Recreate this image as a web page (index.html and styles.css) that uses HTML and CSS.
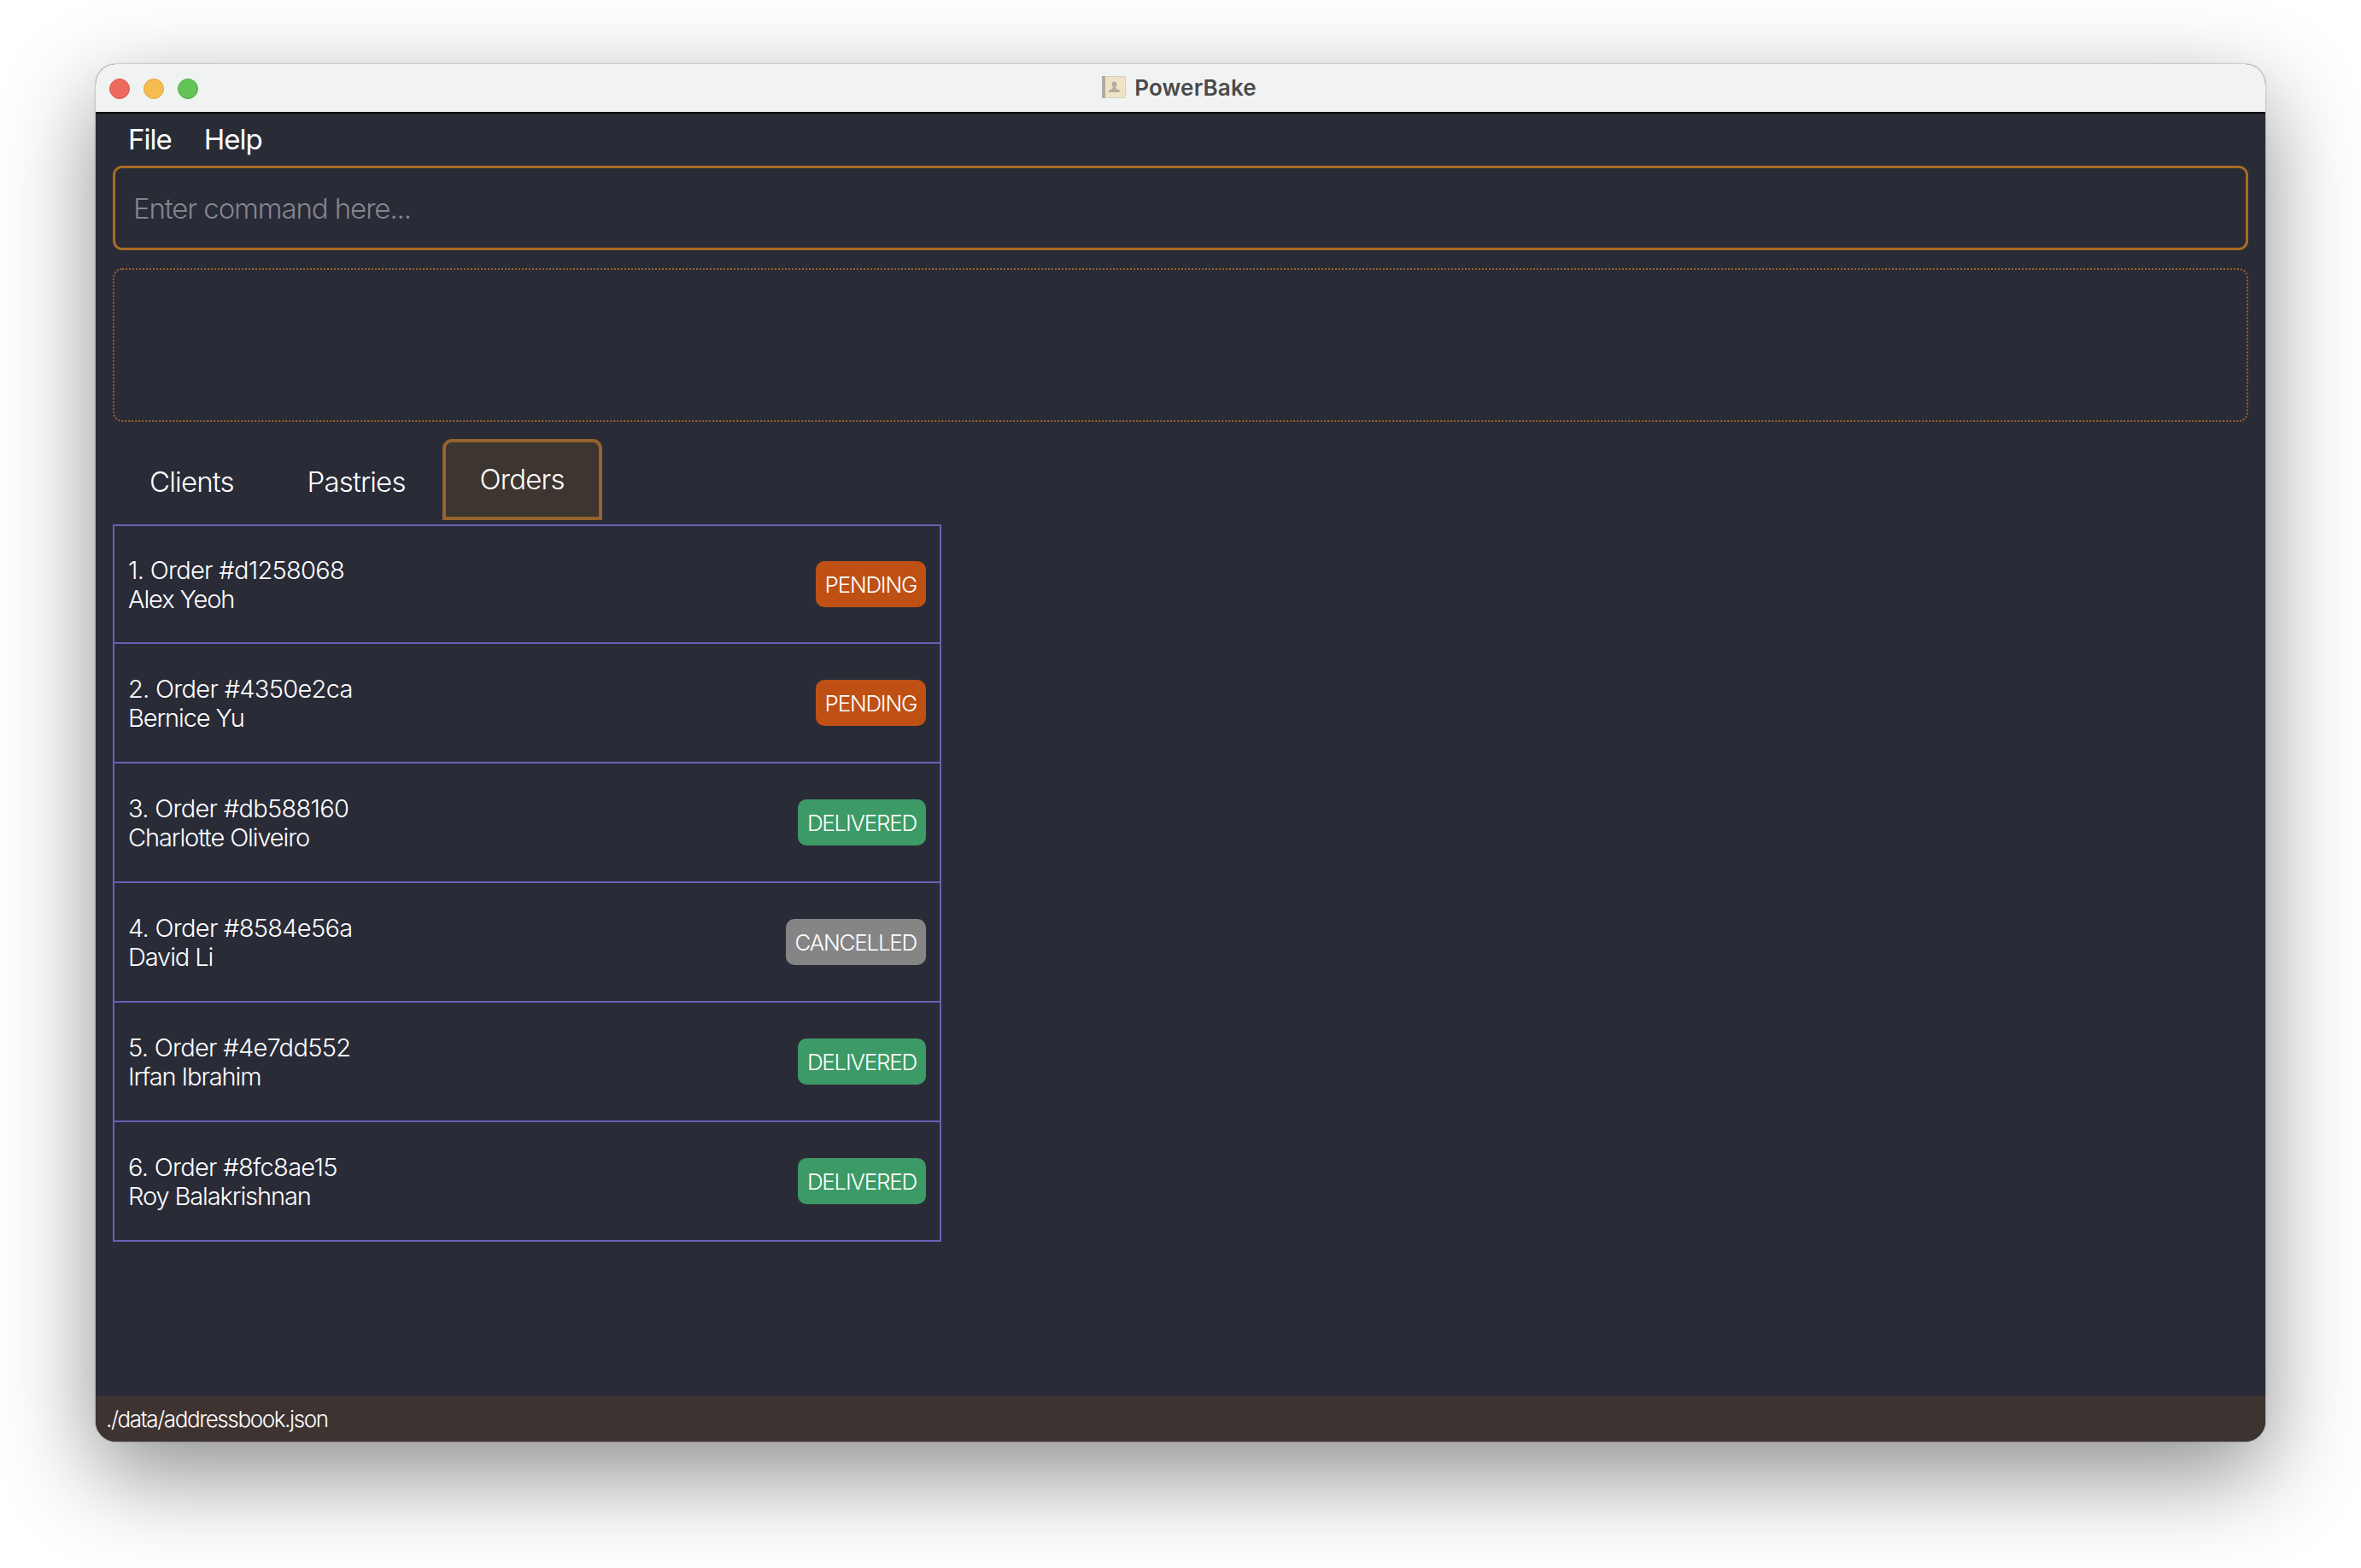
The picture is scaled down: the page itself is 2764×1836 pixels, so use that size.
FILE: index.html
```html
<!DOCTYPE html>
<html lang="en">
<head>
<meta charset="UTF-8">
<title>PowerBake</title>
<link rel="stylesheet" href="styles.css">
</head>
<body>
<div class="window">
  <div class="titlebar">
    <div class="lights">
      <span class="light red"></span>
      <span class="light yellow"></span>
      <span class="light green"></span>
    </div>
    <div class="title">
      <svg class="app-icon" width="28" height="26" viewBox="0 0 28 26">
        <rect x="0.5" y="0.5" width="27" height="25" rx="1.5" fill="#efe3c6" stroke="#d4cfc2"/>
        <rect x="0" y="0" width="4" height="26" rx="1" fill="#b0aca4"/>
        <path d="M11 15.5c1.600-.8 2-1.600 1.700-2.800-1-1-1.300-2.300-1.100-3.700.2-1.500 1.300-2.400 2.900-2.400s2.700.9 2.900 2.400c.2 1.400-.1 2.700-1.100 3.700-.3 1.200.1 2 1.700 2.800 1.900.8 3.500 1.300 3.500 3.500H7.500c0-2.200 1.600-2.700 3.500-3.500z" fill="#b3ada0"/>
      </svg>
      <span>PowerBake</span>
    </div>
  </div>
  <div class="main">
    <div class="menu">
      <span>File</span>
      <span>Help</span>
    </div>
    <div class="command">Enter command here...</div>
    <div class="results"></div>
    <div class="tabs">
      <div class="tab">Clients</div>
      <div class="tab">Pastries</div>
      <div class="tab selected">Orders</div>
    </div>
    <div class="orders">
      <div class="order">
        <div class="info"><div class="order-id">1. Order #d1258068</div><div class="client">Alex Yeoh</div></div>
        <span class="badge pending">PENDING</span>
      </div>
      <div class="order">
        <div class="info"><div class="order-id">2. Order #4350e2ca</div><div class="client">Bernice Yu</div></div>
        <span class="badge pending">PENDING</span>
      </div>
      <div class="order">
        <div class="info"><div class="order-id">3. Order #db588160</div><div class="client">Charlotte Oliveiro</div></div>
        <span class="badge delivered">DELIVERED</span>
      </div>
      <div class="order">
        <div class="info"><div class="order-id">4. Order #8584e56a</div><div class="client">David Li</div></div>
        <span class="badge cancelled">CANCELLED</span>
      </div>
      <div class="order">
        <div class="info"><div class="order-id">5. Order #4e7dd552</div><div class="client">Irfan Ibrahim</div></div>
        <span class="badge delivered">DELIVERED</span>
      </div>
      <div class="order">
        <div class="info"><div class="order-id">6. Order #8fc8ae15</div><div class="client">Roy Balakrishnan</div></div>
        <span class="badge delivered">DELIVERED</span>
      </div>
    </div>
  </div>
  <div class="statusbar">./data/addressbook.json</div>
</div>
</body>
</html>
```

FILE: styles.css
```css
html, body {
  margin: 0;
  height: 100%;
}

body {
  background-color: #fff;
  font-family: Inter, "Liberation Sans", sans-serif;
  font-weight: 300;
  color: #fff;
  padding: 75px 112px 0;
  box-sizing: border-box;
  overflow: hidden;
}

.window {
  height: 1613px;
  display: flex;
  flex-direction: column;
  border-radius: 24px;
  background-color: #292b37;
  box-shadow: 0 38px 110px rgba(0, 0, 0, 0.45), 0 0 2px rgba(0, 0, 0, 0.45);
  overflow: hidden;
}

.titlebar {
  height: 58px;
  flex: none;
  box-sizing: border-box;
  padding-bottom: 2px;
  display: flex;
  align-items: center;
  justify-content: center;
  position: relative;
  background-color: #f1f3f2;
  border-bottom: 2px solid #08080c;
}

.lights {
  position: absolute;
  left: 16px;
  top: 17px;
  display: flex;
  gap: 16px;
}

.light {
  width: 24px;
  height: 24px;
  border-radius: 50%;
  box-sizing: border-box;
}

.red {
  background-color: #ee6a5f;
  border: 1px solid #d9574d;
}

.yellow {
  background-color: #f5bd4f;
  border: 1px solid #dea63a;
}

.green {
  background-color: #61c454;
  border: 1px solid #52ac46;
}

.title {
  display: flex;
  align-items: center;
  gap: 10px;
  margin-left: -3px;
  font-size: 26px;
  font-weight: 600;
  letter-spacing: 0.15px;
  color: #4a4a4a;
}

.main {
  flex: 1;
  padding: 0 20px;
}

.menu {
  height: 59px;
  padding-bottom: 2px;
  display: flex;
  align-items: center;
  gap: 38px;
  padding-left: 18px;
  font-size: 33px;
  font-weight: 400;
  letter-spacing: -1px;
}

.command {
  height: 99px;
  box-sizing: border-box;
  display: flex;
  align-items: center;
  padding-left: 21px;
  border: 3px solid #a86b26;
  border-radius: 11px;
  font-size: 33px;
  letter-spacing: -1.1px;
  color: #85858c;
}

.results {
  height: 180px;
  box-sizing: border-box;
  margin-top: 21px;
  border: 2px dotted #96652a;
  border-radius: 11px;
}

.tabs {
  height: 95px;
  margin-top: 20px;
  display: flex;
}

.tab {
  box-sizing: border-box;
  padding: 30px 43px 0;
  font-size: 33px;
  letter-spacing: -0.85px;
}

.tab.selected {
  padding: 23px 40px 0;
  border: 4px solid #94642a;
  border-radius: 11px 11px 0 0;
  background-color: #3d3530;
}

.orders {
  width: 970px;
  box-sizing: border-box;
  margin-top: 5px;
  border: 2px solid #6a5fb5;
  border-bottom: none;
}

.order {
  height: 140px;
  box-sizing: border-box;
  display: flex;
  align-items: center;
  justify-content: space-between;
  padding: 0 16px;
  border-bottom: 2px solid #6a5fb5;
}

.order:first-child {
  height: 138px;
}

.info {
  padding-top: 2px;
  font-size: 29px;
  line-height: 34px;
}

.order-id {
  letter-spacing: -0.7px;
}

.client {
  letter-spacing: -1.1px;
}

.badge {
  height: 54px;
  box-sizing: border-box;
  display: flex;
  align-items: center;
  padding: 0 11px;
  border-radius: 10px;
  font-size: 26px;
  letter-spacing: -1.25px;
}

.pending {
  background-color: #bf5014;
}

.delivered {
  background-color: #3c9a66;
}

.cancelled {
  background-color: #858585;
}

.statusbar {
  height: 54px;
  flex: none;
  display: flex;
  align-items: center;
  padding-left: 12px;
  background-color: #3d3331;
  font-size: 26px;
  letter-spacing: -1.4px;
}
```
